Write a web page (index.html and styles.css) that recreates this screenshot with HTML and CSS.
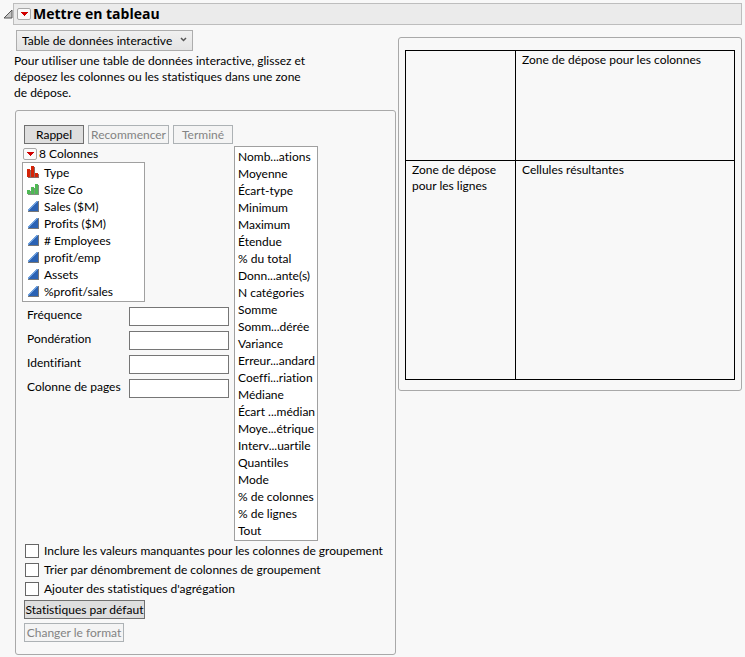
FILE: index.html
```html
<!DOCTYPE html>
<html lang="fr">

<head>
    <meta charset="UTF-8">
    <meta name="viewport" content="width=device-width, initial-scale=1.0">
    <title>Mettre en tableau</title>
    <link rel="stylesheet" href="styles.css">
</head>

<body>
    <svg class="sprite" aria-hidden="true">
        <symbol id="nominal" viewBox="0 0 12 12">
            <path fill="#8a6a66" d="M1 4h4V1h3v7h4v4H1z" />
            <path fill="#d42408" d="M0 3h3v8H0zM4 0h3v11H4zM8 7h3v4H8z" />
        </symbol>
        <symbol id="ordinal" viewBox="0 0 12 12">
            <path fill="#7f937f" d="M1 8h4V5h4V2h3v10H1z" />
            <path fill="#4fb955" d="M0 7h3v4H0zM4 4h3v7H4zM8 1h3v10H8z" />
        </symbol>
        <symbol id="continuous" viewBox="0 0 12 12">
            <path fill="#777" d="M1 12V11L11 1h1v11z" />
            <path fill="#2a62b4" d="M0 11L11 0v11z" />
            <path stroke="#6fa0dc" d="M1 10.500L10.500 1" />
        </symbol>
    </svg>

    <header>
        <svg class="disclosure" viewBox="0 0 10 10">
            <path d="M9 1v8H1z" fill="#c4c4c4" stroke="#555" />
        </svg>
        <div class="titleBar">
            <button class="menuButton" aria-label="Menu Mettre en tableau"><svg viewBox="0 0 8 4">
                    <path d="M0 0h8L4 4z" />
                </svg></button>
            <h1>Mettre en tableau</h1>
        </div>
    </header>

    <main>
        <div class="controls">
            <div class="selectBox">
                <select aria-label="Type de table">
                    <option>Table de données interactive</option>
                </select>
                <svg viewBox="0 0 7 5">
                    <path d="M1 1l2.500 2.500L6 1" />
                </svg>
            </div>
            <p class="help">Pour utiliser une table de données interactive, glissez et déposez les colonnes ou les statistiques dans une zone de dépose.</p>

            <form class="panel">
                <div class="pickers">
                    <div class="columnSide">
                        <div class="toolbar">
                            <button type="button">Rappel</button>
                            <button type="button" class="wide" disabled>Recommencer</button>
                            <button type="button" disabled>Terminé</button>
                        </div>
                        <div class="columnTitle">
                            <button type="button" class="menuButton" aria-label="Menu Colonnes"><svg viewBox="0 0 8 4">
                                    <path d="M0 0h8L4 4z" />
                                </svg></button>
                            <span>8 Colonnes</span>
                        </div>
                        <ul class="listBox columns">
                            <li><svg><use href="#nominal" /></svg>Type</li>
                            <li><svg><use href="#ordinal" /></svg>Size Co</li>
                            <li><svg><use href="#continuous" /></svg>Sales ($M)</li>
                            <li><svg><use href="#continuous" /></svg>Profits ($M)</li>
                            <li><svg><use href="#continuous" /></svg># Employees</li>
                            <li><svg><use href="#continuous" /></svg>profit/emp</li>
                            <li><svg><use href="#continuous" /></svg>Assets</li>
                            <li><svg><use href="#continuous" /></svg>%profit/sales</li>
                        </ul>
                        <div class="fields">
                            <label for="freq">Fréquence</label>
                            <input type="text" id="freq">
                            <label for="weight">Pondération</label>
                            <input type="text" id="weight">
                            <label for="ident">Identifiant</label>
                            <input type="text" id="ident">
                            <label for="page">Colonne de pages</label>
                            <input type="text" id="page">
                        </div>
                    </div>
                    <ul class="listBox stats">
                        <li>Nomb...ations</li>
                        <li>Moyenne</li>
                        <li>Écart-type</li>
                        <li>Minimum</li>
                        <li>Maximum</li>
                        <li>Étendue</li>
                        <li>% du total</li>
                        <li>Donn...ante(s)</li>
                        <li>N catégories</li>
                        <li>Somme</li>
                        <li>Somm...dérée</li>
                        <li>Variance</li>
                        <li>Erreur...andard</li>
                        <li>Coeffi...riation</li>
                        <li>Médiane</li>
                        <li>Écart ...médian</li>
                        <li>Moye...étrique</li>
                        <li>Interv...uartile</li>
                        <li>Quantiles</li>
                        <li>Mode</li>
                        <li>% de colonnes</li>
                        <li>% de lignes</li>
                        <li>Tout</li>
                    </ul>
                </div>
                <div class="options">
                    <label><input type="checkbox">Inclure les valeurs manquantes pour les colonnes de groupement</label>
                    <label><input type="checkbox">Trier par dénombrement de colonnes de groupement</label>
                    <label><input type="checkbox">Ajouter des statistiques d'agrégation</label>
                </div>
                <div class="actions">
                    <button type="button">Statistiques par défaut</button>
                    <button type="button" disabled>Changer le format</button>
                </div>
            </form>
        </div>

        <section class="panel dropPanel">
            <table>
                <tr class="head">
                    <td></td>
                    <td>Zone de dépose pour les colonnes</td>
                </tr>
                <tr>
                    <td>Zone de dépose pour les lignes</td>
                    <td>Cellules résultantes</td>
                </tr>
            </table>
        </section>
    </main>
</body>

</html>
```

FILE: styles.css
```css
* {
    box-sizing: border-box;
}

body {
    margin: 0;
    padding: 3px 3px 2px;
    background: #f8f8f8;
    color: #000;
    font: 12px/16px Lato, "Open Sans", sans-serif;
    font-variant-ligatures: none;
}

button,
input,
select {
    font: inherit;
    color: inherit;
    margin: 0;
}

ul {
    list-style: none;
    margin: 0;
}

.sprite {
    display: none;
}

header {
    display: flex;
    align-items: center;
}

.disclosure {
    width: 10px;
    height: 10px;
}

.titleBar {
    flex: 1;
    display: flex;
    align-items: center;
    gap: 2px;
    height: 22px;
    padding-left: 3px;
    background: #ebebeb;
    border: 1px solid #bdbdbd;
}

h1 {
    margin: 0;
    font-family: "Open Sans", sans-serif;
    font-size: 14px;
    line-height: 20px;
}

.menuButton {
    display: flex;
    align-items: center;
    justify-content: center;
    width: 14px;
    height: 12px;
    padding: 0;
    background: #fafafa;
    border: 1px solid #a8a8a8;
    border-radius: 2px;
}

.menuButton svg {
    flex: none;
    width: 8px;
    height: 4px;
    fill: #d00000;
    shape-rendering: crispEdges;
}

main {
    display: flex;
    align-items: flex-start;
    gap: 2px;
    padding: 5px 0 0 12px;
}

.controls {
    width: 381px;
    flex: none;
}

.selectBox {
    position: relative;
    width: 177px;
    margin-left: 1px;
}

.selectBox select {
    display: block;
    appearance: none;
    width: 100%;
    height: 21px;
    padding: 0 5px;
    background: linear-gradient(#f0f0f0, #e4e4e4);
    border: 1px solid #adadad;
    border-radius: 0;
}

.selectBox svg {
    position: absolute;
    right: 6px;
    top: 7px;
    width: 7px;
    height: 5px;
    fill: none;
    stroke: #555;
    stroke-width: 1.5;
    pointer-events: none;
}

.help {
    max-width: 300px;
    margin: 2px 0 9px -1px;
}

.panel {
    border: 1px solid #a9a9a9;
    border-radius: 3px;
}

form.panel {
    padding: 14px 6px 12px;
}

.pickers {
    display: flex;
    align-items: flex-start;
    gap: 1px;
}

.columnSide {
    width: 211px;
}

.toolbar {
    display: flex;
    gap: 4px;
    padding-left: 2px;
}

.toolbar button,
.actions button {
    width: 60px;
    height: 19px;
    padding: 0;
    line-height: 17px;
    white-space: nowrap;
    background: #dedede;
    border: 1px solid #707070;
}

.toolbar button:disabled,
.actions button:disabled {
    color: #838383;
    background: #f4f4f4;
    border-color: #adb2b5;
}

.toolbar .wide {
    width: 81px;
}

.columnTitle {
    display: flex;
    align-items: center;
    gap: 2px;
    padding: 2px 0 0 1px;
}

.listBox {
    padding: 1px;
    background: #fff;
    border: 1px solid #a0a0a0;
    line-height: 17px;
    white-space: nowrap;
}

.columns {
    width: 123px;
}

.columns li {
    display: flex;
    align-items: flex-start;
    gap: 5px;
    padding-left: 3px;
}

.columns svg {
    width: 12px;
    height: 12px;
    margin-top: 2px;
    shape-rendering: crispEdges;
}

.stats {
    width: 84px;
    margin-top: 21px;
}

.stats li {
    padding-left: 2px;
}

.fields {
    display: grid;
    grid-template-columns: 1fr 100px;
    gap: 5px 0;
    padding: 5px 4px 0 5px;
    line-height: 16px;
}

.fields input {
    width: 100%;
    height: 19px;
    background: #fff;
    border: 1px solid #767676;
}

.options label {
    display: flex;
    align-items: center;
    gap: 5px;
    height: 19px;
    padding-left: 3px;
    white-space: nowrap;
}

.options input {
    flex: none;
    appearance: none;
    width: 14px;
    height: 14px;
    background: #fff;
    border: 1px solid #666;
}

.actions {
    display: flex;
    flex-direction: column;
    gap: 4px;
    padding: 2px 0 0 2px;
}

.actions button {
    width: 121px;
}

.actions button:disabled {
    width: 100px;
}

.dropPanel {
    flex: 1;
    margin-top: 7px;
    padding: 12px 6px 10px;
}

table {
    width: 100%;
    table-layout: fixed;
    border-collapse: collapse;
}

td {
    height: 219px;
    padding: 1px 6px;
    border: 1px solid #000;
    vertical-align: top;
}

td:first-child {
    width: 110px;
}

.head td {
    height: 110px;
}
```
